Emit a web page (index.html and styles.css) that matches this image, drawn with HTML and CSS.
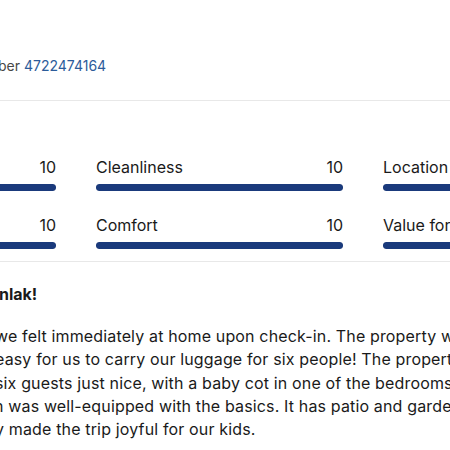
FILE: index.html
```html
<!DOCTYPE html>
<html lang="en">
<head>
<meta charset="utf-8">
<title>Review</title>
<link rel="stylesheet" href="styles.css">
</head>
<body>
<div class="page">
  <header class="meta">
    <p class="meta-line">ber <a class="num" href="#">4722474164</a></p>
  </header>

  <section class="ratings">
    <div class="rating">
      <div class="rating-head"><span class="label">Staff</span><span class="score">10</span></div>
      <div class="bar"><div class="fill" style="width:100%"></div></div>
    </div>
    <div class="rating">
      <div class="rating-head"><span class="label">Cleanliness</span><span class="score">10</span></div>
      <div class="bar"><div class="fill" style="width:100%"></div></div>
    </div>
    <div class="rating">
      <div class="rating-head"><span class="label">Location</span><span class="score">10</span></div>
      <div class="bar"><div class="fill" style="width:100%"></div></div>
    </div>
    <div class="rating">
      <div class="rating-head"><span class="label">Facilities</span><span class="score">10</span></div>
      <div class="bar"><div class="fill" style="width:100%"></div></div>
    </div>
    <div class="rating">
      <div class="rating-head"><span class="label">Comfort</span><span class="score">10</span></div>
      <div class="bar"><div class="fill" style="width:100%"></div></div>
    </div>
    <div class="rating">
      <div class="rating-head"><span class="label">Value for money</span><span class="score">10</span></div>
      <div class="bar"><div class="fill" style="width:100%"></div></div>
    </div>
  </section>

  <article class="review">
    <h3 class="review-title">nlak!</h3>
    <p class="review-body">we felt immediately at home upon check-in. The property was spacious and clean.<br>easy for us to carry our luggage for six people! The property is located close by.<br>six guests just nice, with a baby cot in one of the bedrooms. The beds were comfy.<br><span class="cut-n">n</span> was well-equipped with the basics. It has patio and garden space outside.<br><span class="cut-y">y</span> made the trip joyful for our kids.</p>
  </article>
</div>
</body>
</html>
```

FILE: styles.css
```css
html, body {
  margin: 0;
  padding: 0;
  background: #ffffff;
  overflow: hidden;
}

body {
  font-family: Inter, "Noto Sans", "Liberation Sans", sans-serif;
  color: #1a1a1a;
  width: 450px;
  height: 450px;
}

.page {
  width: 450px;
}

.meta {
  padding-top: 56px;
  padding-bottom: 24px;
  border-bottom: 1px solid #e8e8e8;
}

.meta-line {
  margin: 0 0 0 -2px;
  font-size: 14px;
  line-height: 20px;
  color: #474747;
  white-space: nowrap;
}

.num {
  color: #2c5c9a;
  text-decoration: none;
}

.ratings {
  display: grid;
  grid-template-columns: repeat(3, 247px);
  column-gap: 40px;
  row-gap: 24px;
  margin-left: -191px;
  width: 821px;
  padding-top: 56px;
  padding-bottom: 13px;
  position: relative;
}

.ratings::after {
  content: "";
  position: absolute;
  left: 0;
  right: 0;
  bottom: 0;
  border-bottom: 1px solid #e8e8e8;
}

.rating-head {
  display: flex;
  justify-content: space-between;
  align-items: baseline;
  font-size: 16px;
  line-height: 20px;
  color: #1a1a1a;
  white-space: nowrap;
}

.bar {
  margin-top: 7px;
  height: 7px;
  border-radius: 3px;
  background: #e6e6e6;
  overflow: hidden;
}

.fill {
  height: 100%;
  background: #1a3a7c;
  border-radius: 3px;
}

.review {
  padding-top: 22px;
}

.review-title {
  margin: 0 0 0 -1px;
  font-size: 16px;
  line-height: 20px;
  font-weight: 700;
  white-space: nowrap;
}

.review-body {
  margin: 21px 0 0 -5px;
  font-size: 16px;
  line-height: 23.3px;
  letter-spacing: 0.15px;
  white-space: nowrap;
}

.cut-n {
  margin-left: -1px;
}

.cut-y {
  margin-left: 0;
}
```
